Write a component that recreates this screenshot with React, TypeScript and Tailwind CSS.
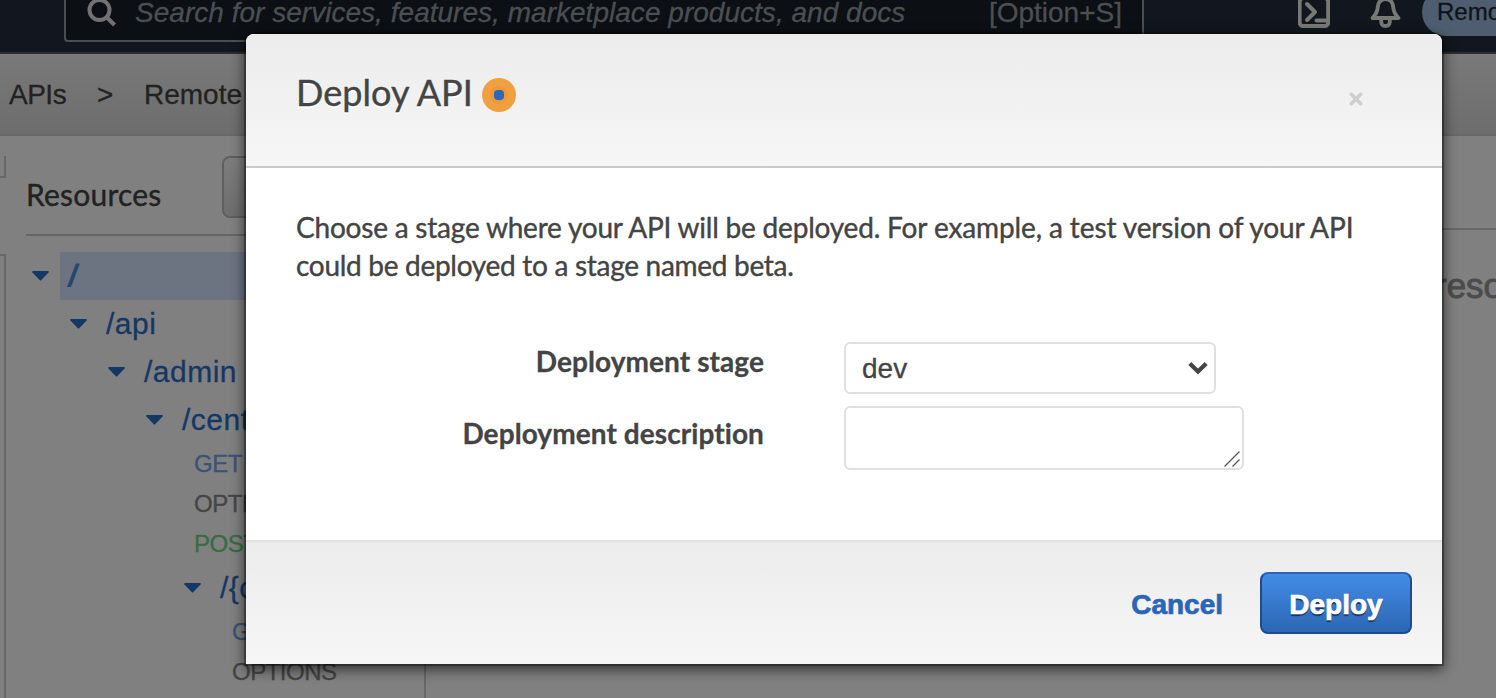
import React from "react";

const sans = "font-['Liberation_Sans',Arial,sans-serif]";
const lato = "font-['Lato','Liberation_Sans',sans-serif]";

type Row =
  | { kind: "path"; label: string; pad: string; selected?: boolean }
  | { kind: "method"; label: string; pad: string; color: string };

const rows: Row[] = [
  { kind: "path", label: "/", pad: "pl-[6px]", selected: true },
  { kind: "path", label: "/api", pad: "pl-[44px]" },
  { kind: "path", label: "/admin", pad: "pl-[82px]" },
  { kind: "path", label: "/centers", pad: "pl-[120px]" },
  { kind: "method", label: "GET", pad: "pl-[168px]", color: "text-[#3a5374]" },
  { kind: "method", label: "OPTIONS", pad: "pl-[168px]", color: "text-[#454545]" },
  { kind: "method", label: "POST", pad: "pl-[168px]", color: "text-[#3a6b43]" },
  { kind: "path", label: "/{centerId}", pad: "pl-[158px]" },
  { kind: "method", label: "GET", pad: "pl-[206px]", color: "text-[#3a5374]" },
  { kind: "method", label: "OPTIONS", pad: "pl-[206px]", color: "text-[#454545]" },
];

function Caret() {
  return (
    <svg width="17" height="10" viewBox="0 0 17 10" className="mt-[-1px] shrink-0">
      <path d="M0.8 0H16.2Q17.4 0.6 16.6 1.5L9.2 9.2Q8.5 9.9 7.8 9.2L0.4 1.5Q-0.4 0.6 0.8 0Z" fill="#153765" />
    </svg>
  );
}

function TreeRow({ row }: { row: Row }) {
  if (row.kind === "method") {
    return (
      <div className={`flex h-[40px] items-center text-[24px] tracking-[-0.5px] [-webkit-text-stroke:0.3px_currentColor] ${row.pad} ${row.color}`}>
        {row.label}
      </div>
    );
  }
  return (
    <div className={`flex h-[48px] items-center gap-[11px] ${row.pad}`}>
      <Caret />
      <div
        className={`flex h-full flex-1 items-center pb-[2px] pl-[8px] text-[30px] tracking-[0.5px] ${
          row.selected
            ? "bg-[#6c7481] text-[#27476f] [-webkit-text-stroke:1.5px_currentColor]"
            : "text-[#153765] [-webkit-text-stroke:0.3px_currentColor]"
        }`}
      >
        {row.selected ? <span className="ml-[1px] inline-block -skew-x-6">{row.label}</span> : row.label}
      </div>
    </div>
  );
}

function TopBar() {
  return (
    <header className="flex h-[54px] items-end overflow-hidden border-b-2 border-[#2b2d30] bg-[#12171f] pb-[10px]">
      <div className="ml-[64px] flex h-[60px] w-[1080px] shrink-0 items-center rounded-[4px] border-2 border-[#4b4e51] bg-[#0c0f14] pl-[20px] pr-[20px] text-[28px] text-[#4b4f52] [-webkit-text-stroke:0.3px_currentColor]">
        <svg width="32" height="32" viewBox="0 0 32 32" fill="none" stroke="#727272" strokeWidth="4" className="shrink-0">
          <circle cx="13.5" cy="14" r="10" />
          <path d="M20.5 21L28.5 29" />
        </svg>
        <span className="ml-[17px] whitespace-nowrap pt-[2px] italic tracking-[0.025px]">
          Search for services, features, marketplace products, and docs
        </span>
        <span className="ml-auto whitespace-nowrap pt-[2px]">[Option+S]</span>
      </div>
      <svg width="32" height="60" viewBox="0 0 32 60" fill="none" stroke="#787875" strokeWidth="4" strokeLinecap="round" strokeLinejoin="round" className="ml-[154px] shrink-0">
        <rect x="1.6" y="16" width="28.6" height="28" rx="3.5" />
        <path d="M9 22L17 30L9 38" />
        <path d="M18.5 38.5H28" />
      </svg>
      <svg width="34" height="60" viewBox="0 0 34 60" fill="none" stroke="#787875" strokeWidth="3.8" strokeLinejoin="round" className="ml-[39px] shrink-0">
        <path d="M3.5 36C7 32.5 8.5 29 8.8 25C9.3 19.500 12 17 16.500 17C21 17 23.700 19.500 24.200 25C24.500 29 26 32.500 29.500 36Z" />
        <path d="M12.200 37V39.500Q12.200 44 16.500 44Q20.800 44 20.800 39.500V37" />
      </svg>
      <div className="mb-[6px] ml-[19px] flex h-[48px] w-[240px] shrink-0 items-center rounded-full bg-[#4e5e70] pl-[15px] text-[24px] text-[#101318] [-webkit-text-stroke:0.3px_currentColor]">
        RemoteUser
      </div>
    </header>
  );
}

function Page() {
  return (
    <div className="flex h-[698px] flex-col overflow-hidden bg-[#808080]">
      <TopBar />
      <nav className="flex h-[82px] shrink-0 items-center border-b-2 border-[#686868] bg-linear-to-b from-[#797979] to-[#6d6d6d] pl-[9px] pt-[2px] text-[28px] text-[#222] [-webkit-text-stroke:0.3px_currentColor]">
        <span className="w-[88px] tracking-[-0.5px]">APIs</span>
        <span className="w-[47px]">&gt;</span>
        <span className="whitespace-nowrap">Remote API</span>
      </nav>
      <div className="flex min-h-0 flex-1">
        <div className="flex w-[6px] shrink-0 flex-col justify-between pt-[20px]">
          <div className="h-[22px] rounded-br-[2px] border-b-2 border-r-2 border-[#686868]" />
          <div className="h-[444px] rounded-tr-[2px] border-r-2 border-t-2 border-[#686868]" />
        </div>
        <aside className="flex w-[420px] shrink-0 flex-col border-r-2 border-[#686868] pl-[20px]">
          <div className="flex h-[100px] shrink-0 items-start border-b-2 border-[#666]">
            <h2 className={`mt-[38px] w-[196px] text-[30px] leading-[40px] tracking-[0.2px] text-[#222] [-webkit-text-stroke:0.4px_currentColor] ${lato}`}>
              Resources
            </h2>
            <div className="mt-[20px] h-[62px] w-[150px] rounded-[8px] border-2 border-[#5f5f5f] bg-linear-to-b from-[#7d7d7d] to-[#6e6e6e]" />
          </div>
          <div className="flex flex-col pt-[16px]">
            {rows.map((row, i) => (
              <TreeRow key={i} row={row} />
            ))}
          </div>
        </aside>
        <section className="flex-1 overflow-hidden">
          <div className="h-[94px] border-b-2 border-[#676767]" />
          <p className="ml-[1009px] mt-[36px] whitespace-nowrap text-[35px] leading-[40px] text-[#4c4c4c] [-webkit-text-stroke:0.9px_currentColor]">
            resources
          </p>
        </section>
      </div>
    </div>
  );
}

function DeployDialog() {
  return (
    <div
      role="dialog"
      className={`absolute left-[246px] top-[34px] flex h-[630px] w-[1196px] flex-col rounded-t-[8px] bg-white text-[#444] shadow-[0_0_0_2px_rgba(0,0,0,0.3),0_4px_14px_1px_rgba(0,0,0,0.65)] ${lato}`}
    >
      <div className="flex h-[134px] shrink-0 items-start rounded-t-[8px] border-b-2 border-[#c9c9c9] bg-linear-to-b from-[#ececec] to-[#f6f6f6] pl-[50px] pr-[79px]">
        <h1 className="mt-[35px] w-[186px] whitespace-nowrap text-[36px] leading-[46px] tracking-[0.05px] [-webkit-text-stroke:0.4px_currentColor] [text-shadow:0_2px_0_#fff]">
          Deploy API
        </h1>
        <span className="mt-[44px] flex h-[34px] w-[34px] items-center justify-center rounded-full bg-[#f0a03f]">
          <span className="flex h-[18px] w-[18px] items-center justify-center rounded-full bg-[#e99a3c]">
            <span className="h-[10px] w-[10px] rounded-[4px] bg-[#2a68b8]" />
          </span>
        </span>
        <svg width="14" height="14" viewBox="0 0 14 14" className="ml-auto mt-[58px]" stroke="#cecece" strokeWidth="3.6" strokeLinecap="round">
          <path d="M2.300 2.300L11.700 11.700M11.700 2.300L2.300 11.700" />
        </svg>
      </div>

      <div className="flex flex-1 flex-col pl-[50px] text-[28px] leading-[38px]">
        <p className="mt-[40px] whitespace-nowrap tracking-[-0.16px] [-webkit-text-stroke:0.4px_currentColor]">
          <span className="tracking-[-0.21px]">Choose a stage where your API will be deployed.</span>{" "}
          <span className="tracking-[-0.11px]">For example, a test version of your API</span>
          <br />
          <span className="tracking-[-0.29px]">could be deployed to a stage named beta.</span>
        </p>
        <div className="mt-[58px] flex">
          <label className="w-[468px] text-right font-bold tracking-[0.08px] [-webkit-text-stroke:0.3px_currentColor] [font-variant-ligatures:none]">
            Deployment stage
          </label>
          <div className={`ml-[80px] flex h-[52px] w-[372px] items-center justify-between rounded-[6px] border-2 border-[#e0e0e0] pl-[16px] pr-[6px] ${sans}`}>
            <span className="pt-[2px] [-webkit-text-stroke:0.3px_currentColor]">dev</span>
            <svg width="20" height="14" viewBox="0 0 20 14" fill="none" stroke="#444" strokeWidth="4.200">
              <path d="M1.800 2.500L10 10.500L18.200 2.500" />
            </svg>
          </div>
        </div>
        <div className="mt-[12px] flex">
          <label className="w-[468px] pt-[8px] text-right font-bold tracking-[0.08px] [-webkit-text-stroke:0.3px_currentColor] [font-variant-ligatures:none]">
            Deployment description
          </label>
          <div className="ml-[80px] flex h-[64px] w-[400px] items-end justify-end rounded-[6px] border-2 border-[#e0e0e0]">
            <svg width="16" height="16" viewBox="0 0 16 16" stroke="#555" strokeWidth="1.300" className="mb-[1px] mr-[2px]">
              <path d="M0.500 15.500L15.500 0.500M8.500 15.500L15.500 8.500" />
            </svg>
          </div>
        </div>
      </div>

      <div className={`flex h-[124px] shrink-0 items-center justify-end border-t-2 border-[#e2e2e2] bg-linear-to-b from-[#ececec] to-[#f6f6f6] pr-[30px] text-[28px] font-bold ${sans}`}>
        <span className="pt-[3px] text-[#2a66b8] [-webkit-text-stroke:0.7px_currentColor]">Cancel</span>
        <button className="ml-[37px] h-[62px] w-[152px] rounded-[8px] border-2 border-[#1f4c8a] border-t-[#2a66b5] bg-linear-to-b from-[#448ce6] to-[#2b66b4] pt-[3px] text-white [-webkit-text-stroke:0.7px_currentColor] [text-shadow:0_2px_1px_#1a2f50]">
          Deploy
        </button>
      </div>
    </div>
  );
}

export default function App() {
  return (
    <div className={`relative h-[698px] w-[1496px] overflow-hidden ${sans}`}>
      <Page />
      <DeployDialog />
    </div>
  );
}
